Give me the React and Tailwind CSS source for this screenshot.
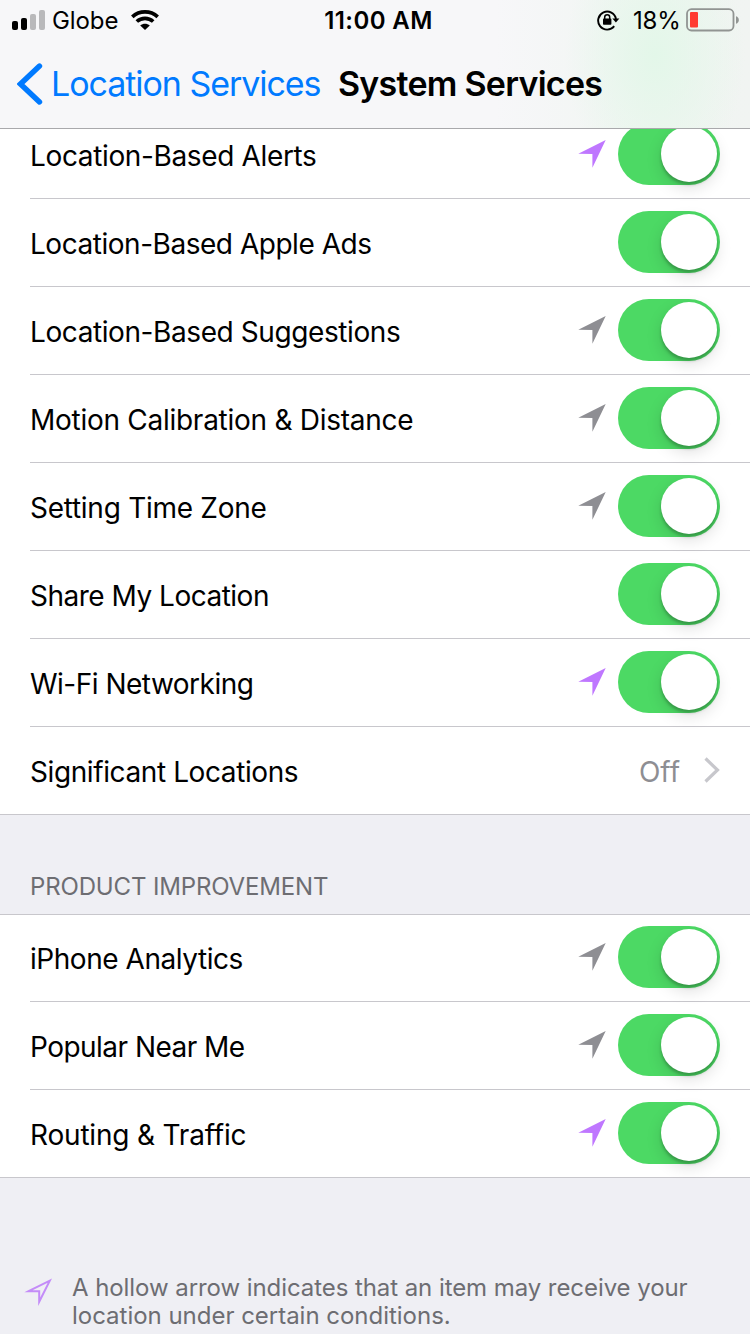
import React, { useState } from 'react';

const SERVICES = [
  { id: 'alerts', label: 'Location-Based Alerts', arrow: 'purple', tracking: 'tracking-[-0.36px]' },
  { id: 'ads', label: 'Location-Based Apple Ads', tracking: 'tracking-[-0.47px]' },
  { id: 'suggestions', label: 'Location-Based Suggestions', arrow: 'gray', tracking: 'tracking-[-0.41px]' },
  { id: 'motion', label: 'Motion Calibration & Distance', arrow: 'gray', tracking: 'tracking-[-0.27px]' },
  { id: 'timezone', label: 'Setting Time Zone', arrow: 'gray', tracking: 'tracking-[-0.27px]' },
  { id: 'share', label: 'Share My Location', tracking: 'tracking-[-0.5px]' },
  { id: 'wifi', label: 'Wi-Fi Networking', arrow: 'purple', tracking: 'tracking-[-0.5px]' },
];

const IMPROVEMENT = [
  { id: 'analytics', label: 'iPhone Analytics', arrow: 'gray', tracking: 'tracking-[-0.45px]' },
  { id: 'popular', label: 'Popular Near Me', arrow: 'gray', tracking: 'tracking-[-0.53px]' },
  { id: 'routing', label: 'Routing & Traffic', arrow: 'purple', tracking: 'tracking-[-0.19px]' },
];

function Arrow({ color }) {
  return (
    <svg viewBox="0 0 28 28" className={`w-7 h-7 ${color === 'purple' ? 'text-[#bf77ff]' : 'text-[#8e8e93]'}`}>
      <path d="M0.3 13.8L27.7 0L14.4 27.8V14Z" fill="currentColor" />
    </svg>
  );
}

function HollowArrow() {
  return (
    <svg viewBox="0 0 28 28" className="w-7 h-7 text-[#c48cf8]">
      <path d="M4.6 13.2L25.8 2.6L15.2 23.8V13.2Z" fill="none" stroke="currentColor" strokeWidth="2" strokeMiterlimit="8" />
    </svg>
  );
}

function Toggle({ on, onClick }) {
  return (
    <button
      onClick={onClick}
      className={`w-[102px] h-[62px] rounded-full p-[3px] flex ${on ? 'justify-end bg-[#4cd964]' : 'justify-start bg-gray-200'}`}
    >
      <span className="w-14 h-14 rounded-full bg-white shadow-[0_3px_3px_rgba(0,0,0,0.22),0_6px_16px_rgba(0,0,0,0.13)]" />
    </button>
  );
}

function Row({ item, last, on, onToggle, className = 'h-[88px] pt-3' }) {
  return (
    <div className={`${last ? '' : 'ml-[30px]'} border-b border-[#c8c7cc] ${className}`}>
      <div className={`flex items-center h-[62px] pr-[30px] ${last ? 'pl-[30px]' : ''}`}>
        <span className={`flex-1 pt-1 text-[28px] leading-[34px] ${item.tracking}`}>{item.label}</span>
        {item.arrow && <div className="mr-3 mb-px"><Arrow color={item.arrow} /></div>}
        <Toggle on={on} onClick={onToggle} />
      </div>
    </div>
  );
}

function StatusBar() {
  return (
    <div className="h-10 flex items-center justify-between pl-3 pr-[11px] text-2xl leading-10">
      <div className="flex items-center w-[300px]">
        {/* señal */}
        <svg viewBox="0 0 33 20" className="w-[33px] h-5">
          <rect x="0" y="11" width="6" height="9" rx="2" fill="#000" />
          <rect x="9" y="8" width="6" height="12" rx="2" fill="#000" />
          <rect x="18" y="4" width="6" height="16" rx="2" fill="#b9b9bb" />
          <rect x="27" y="0" width="6" height="20" rx="2" fill="#b9b9bb" />
        </svg>
        <span className="ml-[7px] w-[66px] pt-px tracking-[-0.1px] whitespace-nowrap">Globe</span>
        {/* wifi */}
        <svg viewBox="0 0 28 20" className="w-7 h-5 ml-[13px]" fill="none" stroke="#000" strokeWidth="3.7">
          <path d="M1.3 6.8C8.5 0.2 19.5 0.2 26.7 6.8" />
          <path d="M5.8 11.5C10.5 7.2 17.5 7.2 22.2 11.5" />
          <path d="M14 20L9.2 15.4C12 13.1 16 13.1 18.8 15.4Z" fill="#000" stroke="none" />
        </svg>
      </div>
      <span className="pt-px pl-[6px] font-semibold tracking-[0.4px] whitespace-nowrap">11:00 AM</span>
      <div className="flex items-center justify-end w-[300px]">
        {/* bloqueo de rotación */}
        <svg viewBox="0 0 23 22" className="w-[23px] h-[22px]">
          <path d="M17.2 17.2A9 9 0 1 1 19 10" fill="none" stroke="#000" strokeWidth="1.9" />
          <path d="M15.4 9.5H22.4L18.9 13.6Z" fill="#000" />
          <rect x="6" y="9.6" width="8.4" height="6.2" rx="0.8" fill="#000" />
          <path d="M7.7 10V8.2A2.5 2.5 0 0 1 12.7 8.2V10" fill="none" stroke="#000" strokeWidth="1.5" />
        </svg>
        <span className="ml-[13px] w-[47px] pt-px tracking-[-0.2px] whitespace-nowrap">18%</span>
        {/* batería */}
        <svg viewBox="0 0 53 24" className="w-[53px] h-6 ml-[6px]">
          <rect x="1" y="1.2" width="46.5" height="21.3" rx="4.5" fill="none" stroke="#919492" strokeWidth="1.8" />
          <rect x="4" y="4" width="8" height="15.5" rx="1" fill="#ff3b30" />
          <path d="M50 8.3C53.8 9.3 53.8 14.7 50 15.7Z" fill="#919492" />
        </svg>
      </div>
    </div>
  );
}

export default function App() {
  const [apagados, setApagados] = useState({});

  const toggle = (id) => {
    setApagados(prev => ({ ...prev, [id]: !prev[id] }));
  };

  return (
    <div className="w-[750px] h-[1334px] overflow-hidden bg-[#efeff4] text-black font-['Inter',sans-serif]">

      {/* CABECERA */}
      <header className="relative z-10 h-[129px] border-b border-[#a9a9ac] bg-[#f7f7f9] bg-[radial-gradient(90px_130px_at_655px_55px,#e3f7e9,rgba(227,247,233,0)),linear-gradient(90deg,#f7f7f9_66%,#f0f5f1_88%,#f1f4f2_100%)]">
        <StatusBar />
        <div className="flex items-center h-[88px] pl-[17px]">
          <svg viewBox="0 0 26 42" className="w-[26px] h-[42px]">
            <path d="M22.5 3L3.5 21L22.5 39" fill="none" stroke="#007aff" strokeWidth="5.4" strokeLinecap="round" />
          </svg>
          <span className="ml-2 w-[287px] pb-px text-[34px] tracking-[-1.05px] text-[#007aff] whitespace-nowrap">Location Services</span>
          <h1 className="pb-px text-[34px] font-semibold tracking-[-0.75px] whitespace-nowrap">System Services</h1>
        </div>
      </header>

      {/* SERVICIOS */}
      <div className="-mt-[18px] bg-white">
        {SERVICES.map(item => (
          <Row key={item.id} item={item} on={!apagados[item.id]} onToggle={() => toggle(item.id)} />
        ))}
        <div className="h-[88px] flex items-center px-[30px] border-b border-[#c8c7cc]">
          <span className="flex-1 pt-[3px] text-[28px] tracking-[-0.4px]">Significant Locations</span>
          <span className="pt-[3px] mr-6 text-[28px] text-[#8e8e93]">Off</span>
          <svg viewBox="0 0 16 26" className="w-4 h-[26px] mb-px">
            <path d="M1.5 1.5L13.5 13L1.5 24.5" fill="none" stroke="#c7c7cc" strokeWidth="3.2" />
          </svg>
        </div>
      </div>

      {/* MEJORA DE PRODUCTO */}
      <h2 className="h-[100px] pt-14 pl-[30px] border-b border-[#c8c7cc] text-2xl tracking-[-0.15px] text-[#6d6d72]">PRODUCT IMPROVEMENT</h2>
      <div className="bg-white">
        {IMPROVEMENT.map((item, i) => (
          <Row
            key={item.id}
            item={item}
            last={i === IMPROVEMENT.length - 1}
            on={!apagados[item.id]}
            onToggle={() => toggle(item.id)}
            className={i === 0 ? 'h-[87px] pt-[11px]' : 'h-[88px] pt-3'}
          />
        ))}
      </div>

      {/* LEYENDA */}
      <div className="flex mt-24 pl-6 text-[#6d6d72]">
        <div className="pt-1"><HollowArrow /></div>
        <p className="ml-5 text-2xl leading-7 tracking-[-0.07px] whitespace-nowrap">
          A hollow arrow indicates that an item may receive your<br />
          <span className="tracking-[-0.02px]">location under certain conditions.</span>
        </p>
      </div>
    </div>
  );
}
